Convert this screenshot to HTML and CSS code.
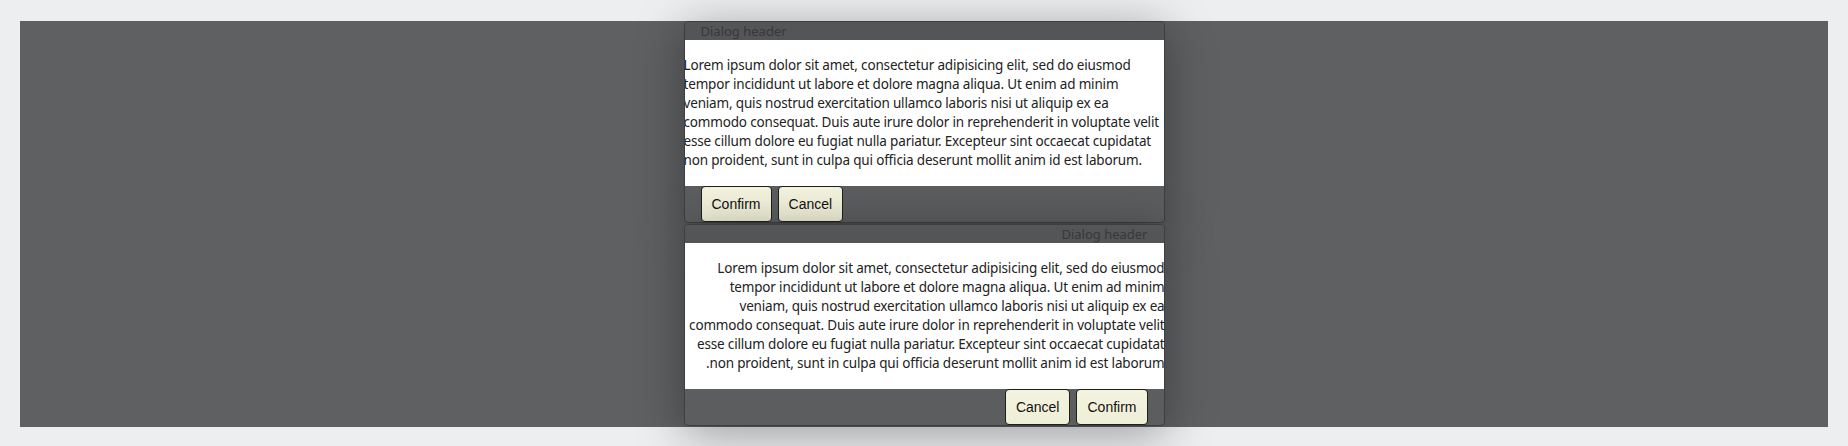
FILE: index.html
```html
<!DOCTYPE html>
<html lang="en">
<head>
<meta charset="utf-8">
<title>Dialogs</title>
<link rel="stylesheet" href="styles.css">
</head>
<body>
<div class="backdrop">
  <div class="stack">
    <section class="dialog">
      <header class="dialog-header">Dialog header</header>
      <div class="dialog-body">
        <p>Lorem ipsum dolor sit amet, consectetur adipisicing elit, sed do eiusmod tempor incididunt ut labore et dolore magna aliqua. Ut enim ad minim veniam, quis nostrud exercitation ullamco laboris nisi ut aliquip ex ea commodo consequat. Duis aute irure dolor in reprehenderit in voluptate velit esse cillum dolore eu fugiat nulla pariatur. Excepteur sint occaecat cupidatat non proident, sunt in culpa qui officia deserunt mollit anim id est laborum.</p>
      </div>
      <footer class="dialog-footer">
        <button class="btn btn-confirm">Confirm</button>
        <button class="btn btn-cancel">Cancel</button>
      </footer>
    </section>
    <section class="dialog" dir="rtl">
      <header class="dialog-header">Dialog header</header>
      <div class="dialog-body">
        <p>Lorem ipsum dolor sit amet, consectetur adipisicing elit, sed do eiusmod tempor incididunt ut labore et dolore magna aliqua. Ut enim ad minim veniam, quis nostrud exercitation ullamco laboris nisi ut aliquip ex ea commodo consequat. Duis aute irure dolor in reprehenderit in voluptate velit esse cillum dolore eu fugiat nulla pariatur. Excepteur sint occaecat cupidatat non proident, sunt in culpa qui officia deserunt mollit anim id est laborum.</p>
      </div>
      <footer class="dialog-footer">
        <button class="btn btn-confirm">Confirm</button>
        <button class="btn btn-cancel">Cancel</button>
      </footer>
    </section>
  </div>
</div>
</body>
</html>
```
FILE: styles.css
```css
html, body {
  margin: 0;
  padding: 0;
}
body {
  background: #edeef0;
  padding: 21px 20px 19px 20px;
  font-family: "Noto Sans", "Liberation Sans", sans-serif;
}
.backdrop {
  height: 406px;
  background: #5f6062;
  display: flex;
  justify-content: center;
  align-items: flex-start;
}
.stack {
  width: 481px;
  display: flex;
  flex-direction: column;
  gap: 1px;
}
.dialog {
  box-sizing: border-box;
  width: 481px;
  border: 1px solid #3d3e40;
  border-radius: 4px;
  background: #5c5d5f;
  box-shadow: 0 8px 48px rgba(0, 0, 0, 0.35);
  overflow: hidden;
}
.dialog-header {
  height: 18px;
  line-height: 18px;
  padding: 0 16px;
  background: #545557;
  color: #37383a;
  font-size: 13px;
}
.dialog-body {
  background: #ffffff;
  color: #222222;
  margin: 0 -1px;
}
.dialog-body p {
  margin: 0;
  padding: 16px 0;
  font-size: 13.5px;
  line-height: 19px;
  letter-spacing: -0.17px;
}
.dialog-footer {
  display: flex;
  gap: 6px;
  padding: 0 16px;
  height: 36px;
}
.btn {
  box-sizing: border-box;
  height: 36px;
  padding: 0 10px;
  border: 1px solid #1f1f1f;
  border-radius: 4px;
  background: linear-gradient(#f4f3e0, #efeed6);
  color: #111111;
  font-family: "Liberation Sans", Arial, sans-serif;
  font-size: 14px;
}
```
